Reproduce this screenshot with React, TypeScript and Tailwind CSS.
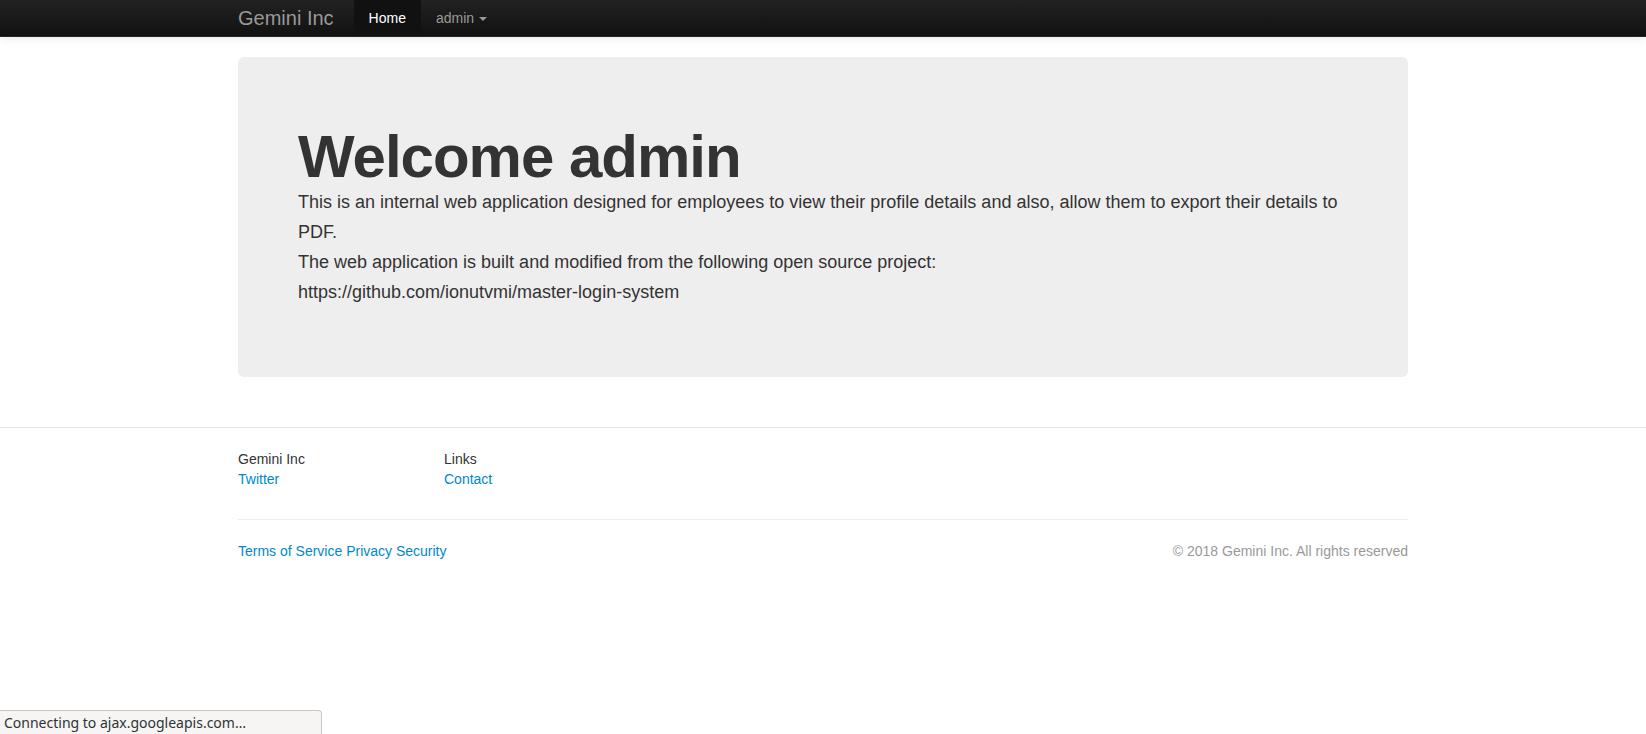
import React from "react";

export default function App() {
  return (
    <div
      className="min-h-[734px] bg-white text-[#333] text-[14px] leading-[20px]"
      style={{ fontFamily: '"Liberation Sans", Arial, Helvetica, sans-serif' }}
    >
      {/* Navbar */}
      <div className="h-[37px] bg-gradient-to-b from-[#222222] to-[#111111] border-b border-[#252525] shadow-[0_1px_10px_rgba(0,0,0,0.1)]">
        <div className="w-[1170px] mx-auto h-full flex items-stretch">
          <a className="flex items-center pr-[20px] text-[20px] text-[#999] leading-[20px]" href="#">
            Gemini Inc
          </a>
          <a className="flex items-center px-[15px] bg-[#111] text-white text-[14px]" href="#">
            Home
          </a>
          <a className="flex items-center px-[15px] text-[#999] text-[14px]" href="#">
            admin
            <span className="inline-block w-0 h-0 ml-[5px] mt-[1px] border-t-[4px] border-t-[#999] border-x-[4px] border-x-transparent" />
          </a>
        </div>
      </div>

      {/* Main */}
      <div className="w-[1170px] mx-auto pt-[20px] pb-[20px]">
        <div className="bg-[#eee] rounded-[6px] p-[60px] mb-[30px]">
          <h1 className="mt-[10px] text-[60px] leading-[60px] font-bold tracking-[-1px] text-[#333]">
            Welcome admin
          </h1>
          <p className="text-[18px] leading-[30px] mb-[10px] text-[#333]">
            This is an internal web application designed for employees to view their profile details and also, allow them to export their details to PDF.
            <br />
            The web application is built and modified from the following open source project:
            <br />
            https://github.com/ionutvmi/master-login-system
          </p>
        </div>
      </div>

      {/* Footer */}
      <div className="border-t border-[#e5e5e5]">
        <div className="w-[1170px] mx-auto pt-[21px]">
          <div className="flex">
            <div className="w-[206px] flex flex-col">
              <span className="text-[#333]">Gemini Inc</span>
              <a href="#" className="text-[#0088cc]">Twitter</a>
            </div>
            <div className="flex flex-col">
              <span className="text-[#333]">Links</span>
              <a href="#" className="text-[#0088cc]">Contact</a>
            </div>
          </div>
          <div className="mt-[30px] mb-[20px] border-t border-[#eee] border-b border-b-white" />
          <div className="flex justify-between">
            <div className="text-[#0088cc]">
              <a href="#">Terms of Service</a> <a href="#">Privacy</a> <a href="#">Security</a>
            </div>
            <div className="text-[#999]">© 2018 Gemini Inc. All rights reserved</div>
          </div>
        </div>
      </div>

      {/* Browser status bubble */}
      <div
        className="fixed bottom-0 left-0 w-[322px] h-[24px] bg-[#f6f5f4] border-t border-r border-[#cdc7c2] rounded-tr-[4px] flex items-center pl-[4px] text-[14px] text-[#2e3436]"
        style={{ fontFamily: '"Noto Sans", "DejaVu Sans", sans-serif' }}
      >
        Connecting to ajax.googleapis.com…
      </div>
    </div>
  );
}
